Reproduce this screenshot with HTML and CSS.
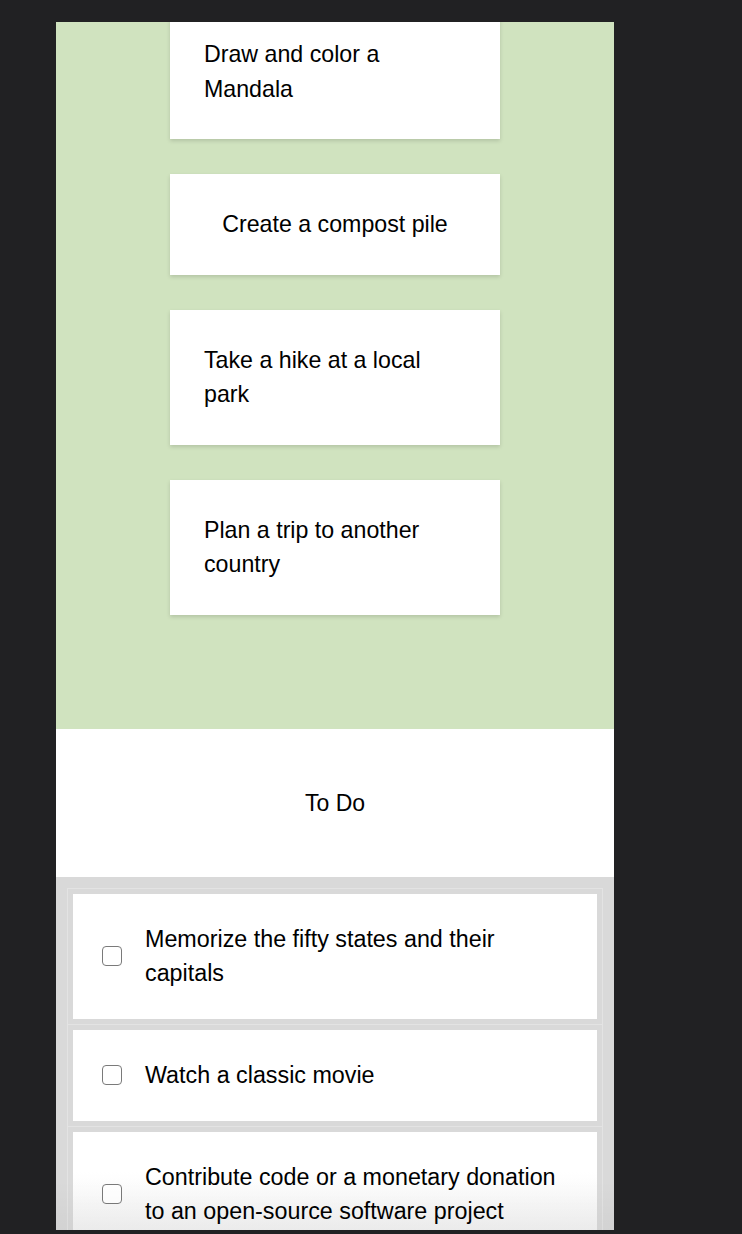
FILE: index.html
```html
<!DOCTYPE html>
<html lang="en">
<head>
<meta charset="utf-8">
<title>Activities</title>
<link rel="stylesheet" href="styles.css">
</head>
<body>
<div class="frame">
  <main class="panel">
    <div class="scroller">
      <section class="ideas">
        <div class="idea">Draw and color a Mandala</div>
        <div class="idea">Create a compost pile</div>
        <div class="idea">Take a hike at a local park</div>
        <div class="idea">Plan a trip to another country</div>
      </section>
      <section class="todo-head">
        <h2 class="todo-title">To Do</h2>
      </section>
      <section class="todo-list">
        <label class="todo-item">
          <span class="todo-inner"><input type="checkbox" class="check"><span class="todo-text">Memorize the fifty states and their capitals</span></span>
        </label>
        <label class="todo-item">
          <span class="todo-inner"><input type="checkbox" class="check"><span class="todo-text">Watch a classic movie</span></span>
        </label>
        <label class="todo-item">
          <span class="todo-inner"><input type="checkbox" class="check"><span class="todo-text">Contribute code or a monetary donation to an open-source software project</span></span>
        </label>
      </section>
    </div>
    <div class="fade"></div>
  </main>
</div>
</body>
</html>
```

FILE: styles.css
```css
* { box-sizing: border-box; }

html, body {
  margin: 0;
  padding: 0;
  background: #212123;
  height: 100%;
  overflow: hidden;
}

body {
  font-family: "Liberation Sans", Arial, sans-serif;
  color: #000;
}

.frame {
  padding-top: 22px;
  padding-left: 56px;
}

.panel {
  position: relative;
  width: 558px;
  height: 1208px;
  overflow: hidden;
  background: #ffffff;
}

.scroller {
  margin-top: -18px;
}

.ideas {
  background: #d0e3bf;
  display: flex;
  flex-direction: column;
  align-items: center;
  gap: 35px;
  padding-bottom: 114px;
}

.idea {
  width: 330px;
  background: #fff;
  padding: 33px 34px;
  font-size: 23.2px;
  line-height: 34.5px;
  display: flex;
  justify-content: center;
  align-items: center;
  box-shadow: 0 2px 4px rgba(0, 0, 0, 0.14);
}

.todo-head {
  height: 148px;
  display: flex;
  align-items: center;
  justify-content: center;
  background: #fff;
}

.todo-title {
  margin: 0;
  font-weight: normal;
  font-size: 23px;
  line-height: 34px;
  padding-top: 1px;
}

.todo-list {
  background: #d9d9d9;
  padding: 11px;
  display: flex;
  flex-direction: column;
}

.todo-item {
  display: block;
  border: 1px solid #e3e3e3;
  padding: 5px;
}

.todo-item + .todo-item {
  margin-top: -1px;
}

.todo-inner {
  display: flex;
  align-items: center;
  background: #fff;
  padding: 28.5px 28px 28.5px 29px;
  font-size: 23.3px;
  line-height: 34px;
}

.todo-item:last-child .todo-inner {
  background: linear-gradient(#ffffff 0px, #ffffff 40px, #f2f2f2 100px);
}

.check {
  appearance: none;
  -webkit-appearance: none;
  flex: none;
  width: 20px;
  height: 20px;
  margin: 0 23px 0 0;
  border: 1.5px solid #7a7a7a;
  border-radius: 4px;
  background: #fff;
}

.todo-text {
  flex: 1;
}

.fade {
  position: absolute;
  left: 0;
  right: 0;
  bottom: 0;
  height: 50px;
  background: linear-gradient(rgba(0, 0, 0, 0), rgba(0, 0, 0, 0.03));
  pointer-events: none;
}
```
